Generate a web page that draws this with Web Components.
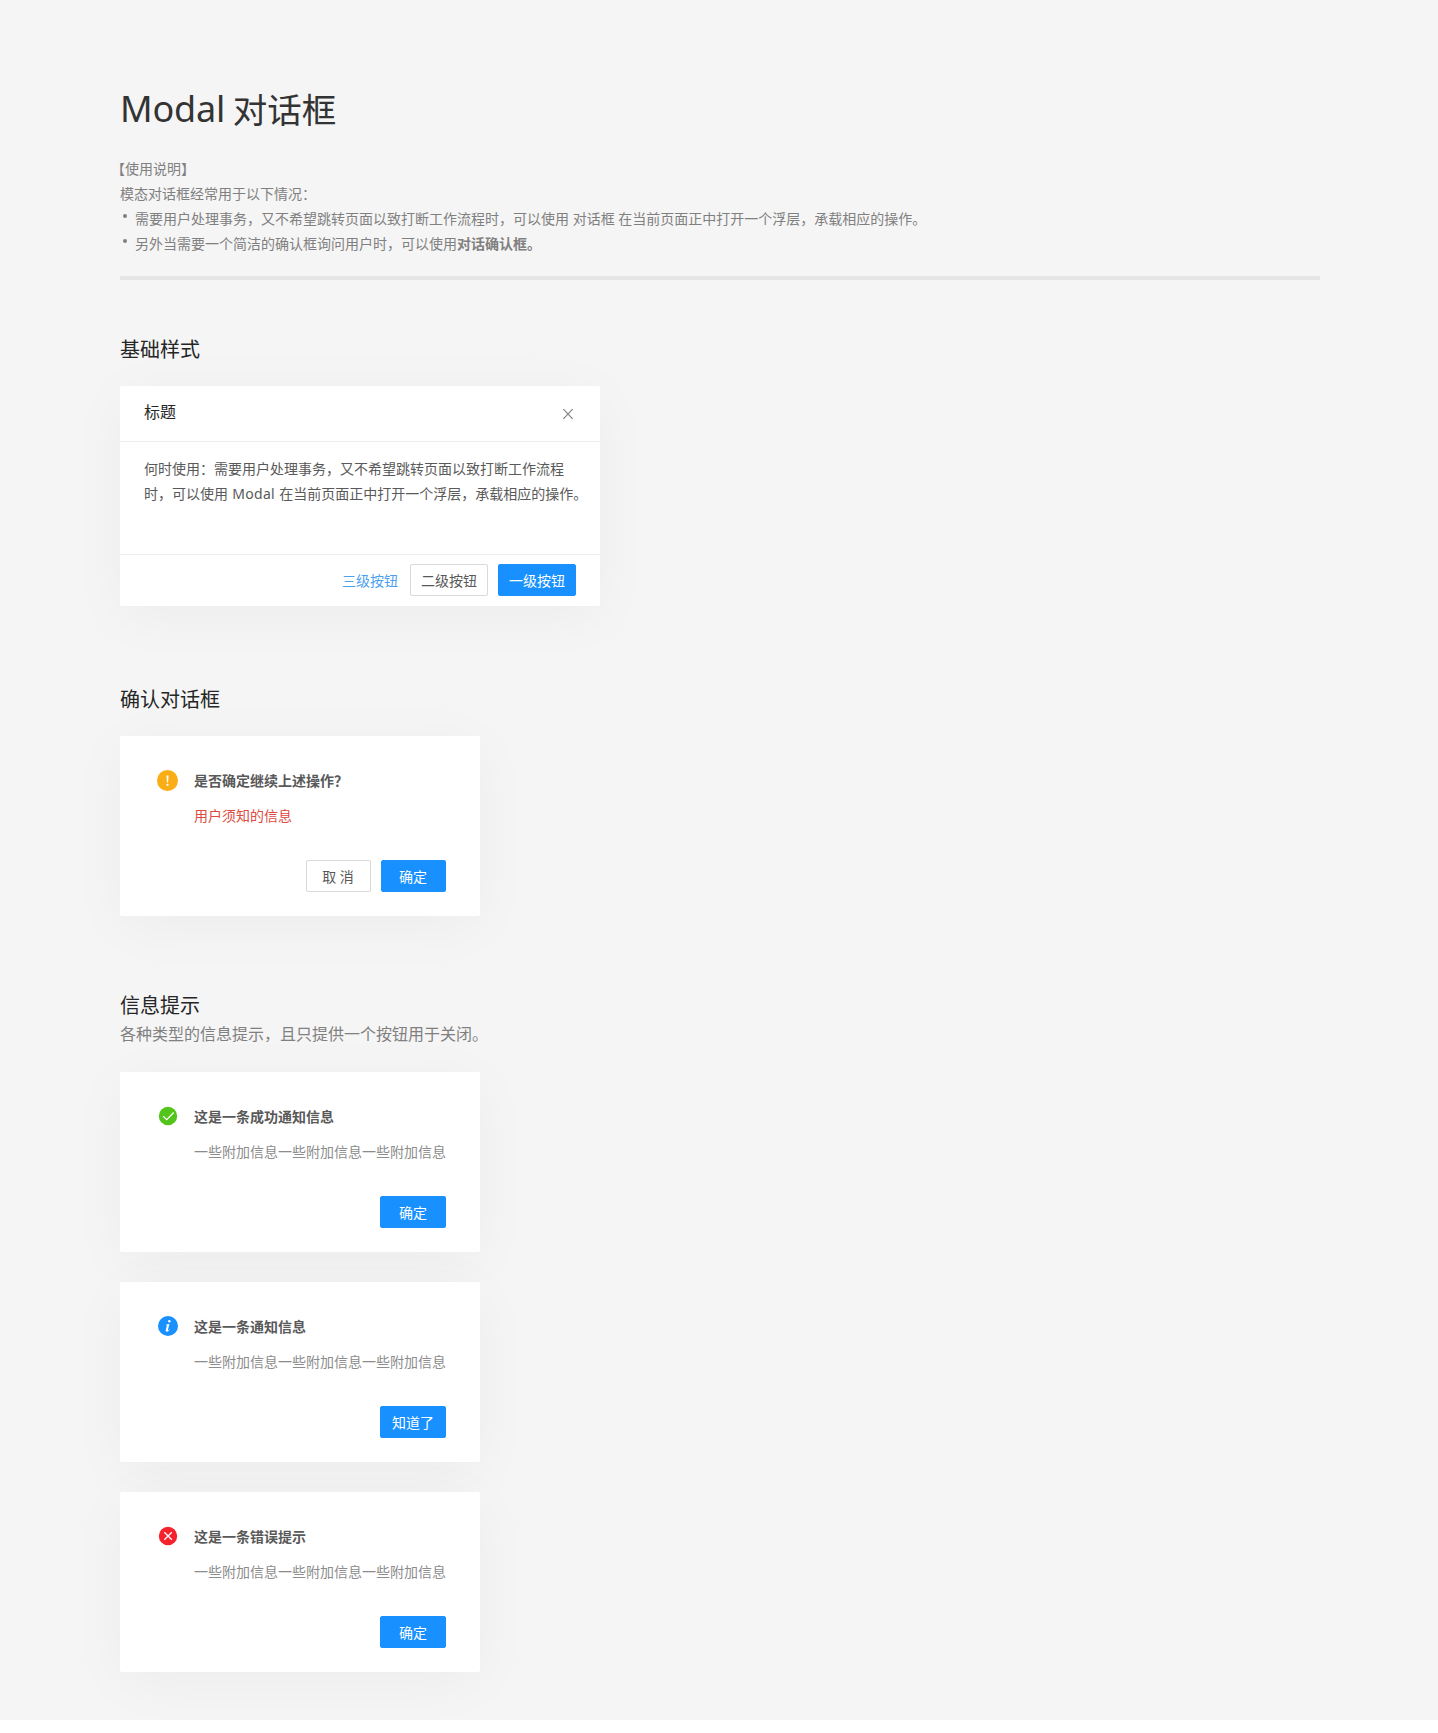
<!DOCTYPE html>
<html lang="zh-CN">
<head>
<meta charset="utf-8">
<title>Modal 对话框</title>
<style>
html{background:#fff}
body{margin:0;font-family:"Noto Sans","Noto Sans CJK SC",sans-serif;font-size:14px}
</style>
</head>
<body>
<modal-doc></modal-doc>
<script>
const define = (name, html) => {
  const tpl = document.createElement('template');
  tpl.innerHTML = html;
  customElements.define(name, class extends HTMLElement {
    constructor() {
      super();
      this.attachShadow({ mode: 'open' }).appendChild(tpl.content.cloneNode(true));
    }
  });
};

define('ui-button', `
<style>
:host{display:flex;box-sizing:border-box;height:32px;width:78px;align-items:center;justify-content:center;border:1px solid #d9d9d9;border-radius:2px;background:#fff;color:#595959;line-height:32px;white-space:nowrap}
:host([kind=primary]){background:#1890ff;border-color:#1890ff;color:#fff}
:host([kind=link]){width:auto;border-color:transparent;background:none;color:#4ba1ee;margin-right:1px}
:host([size=m]){width:65px}
:host([size=l]){width:66px}
span{position:relative;top:1px}
:host([size=m]) span{left:-.5px}
</style><span><slot></slot></span>`);

const glyphs = {
  warning: '<circle cx="10.5" cy="10.5" r="10.5" fill="#faad14"/><path d="M9.5 5.4h2l-.4 7h-1.2z" fill="#fff"/><circle cx="10.5" cy="14.9" r="1.1" fill="#fff"/>',
  success: '<circle cx="11" cy="10" r="9.2" fill="#52c41a"/><path d="M6.2 10.3l3.5 3.4 7-7.2" fill="none" stroke="#fff" stroke-width="1.3"/>',
  info: '<circle cx="11" cy="10" r="10" fill="#1890ff"/><circle cx="12.3" cy="5.2" r="1.25" fill="#fff"/><path d="M9.2 8.5l3.300-.6-1.600 5.900q-.2.900.3.700.6-.3 1.200-1.200l.4.3q-1.400 2.200-2.900 2.200-1.600-.1-1.200-1.700l1.100-4.200q.2-.8-.7-.8z" fill="#fff"/>',
  error: '<circle cx="11" cy="10" r="9.200" fill="#f5222d"/><path d="M7.300 6.200l7.500 7.500M14.800 6.200l-7.500 7.500" fill="none" stroke="#fff" stroke-width="1.300"/>'
};
customElements.define('status-icon', class extends HTMLElement {
  connectedCallback() {
    if (this.shadowRoot) return;
    this.attachShadow({ mode: 'open' }).innerHTML =
      `<style>:host{display:block;width:22px;height:22px}svg{display:block}</style><svg width="22" height="22" viewBox="0 0 22 22">${glyphs[this.getAttribute('type')]}</svg>`;
  }
});

define('ui-modal', `
<style>
:host{display:flex;flex-direction:column;width:480px;height:220px;background:#fff;border-radius:2px;box-shadow:0 10px 60px rgba(0,0,0,.04)}
header{display:flex;box-sizing:border-box;height:56px;padding:0 27px 5px 24px;align-items:center;justify-content:space-between;border-bottom:1px solid #ececec;font-size:16px;color:#262626}
svg{display:block;margin-top:5px}
main{flex:1;padding:14px 0 0 24px;line-height:25px;color:#595959;white-space:nowrap}
footer{display:flex;box-sizing:border-box;height:52px;padding:9px 24px 0;gap:10px;justify-content:flex-end;border-top:1px solid #ececec}
</style>
<header><slot name="title"></slot><svg width="10" height="10" viewBox="0 0 10 10"><path d="M.3 0l9.400 10M9.700 0L.3 10" fill="none" stroke="#808080" stroke-width="1.100"/></svg></header>
<main><slot></slot></main>
<footer><slot name="actions"></slot></footer>`);

define('ui-confirm', `
<style>
:host{display:flex;box-sizing:border-box;flex-direction:column;width:360px;height:180px;padding:34px 34px 24px 37px;background:#fff;border-radius:2px;box-shadow:0 10px 60px rgba(0,0,0,.04)}
.row{display:flex;gap:15px;flex:1}
.text{display:flex;flex-direction:column;gap:11px;margin-top:-1px;line-height:24px;color:#8c8c8c;white-space:nowrap}
b{font-weight:600;color:#595959}
:host([danger]) .info{color:#dc4a41}
.actions{display:flex;gap:10px;justify-content:flex-end}
</style>
<div class="row"><slot name="icon"></slot><div class="text"><b><slot name="title"></slot></b><span class="info"><slot></slot></span></div></div>
<div class="actions"><slot name="actions"></slot></div>`);

define('doc-section', `
<style>
:host{display:flex;flex-direction:column;align-items:flex-start}
h2{margin:0 0 21px;font-weight:400;font-size:20px;line-height:30px;color:#262626}
:host([described]) h2{margin:0}
p{display:none;margin:0 0 26px;padding-top:1px;font-size:16px;line-height:24px;color:#808080}
:host([described]) p{display:block}
.stack{display:flex;flex-direction:column;gap:30px}
</style>
<h2><slot name="heading"></slot></h2><p><slot name="desc"></slot></p><div class="stack"><slot></slot></div>`);

define('doc-intro', `
<style>
:host{display:block;border-bottom:4px solid #e5e5e5;height:187px;color:#808080;line-height:25px}
h1{margin:0 0 27px;font-weight:400;font-size:36px;line-height:40px;letter-spacing:-.2px;word-spacing:-1.500px;color:#333}
h1 span{position:relative;top:1px;font-size:34.500px;letter-spacing:0}
p,ul{margin:0;padding:0;list-style:none;white-space:nowrap}
.lead{margin-left:-9px}
li{display:flex;align-items:center}
li::before{content:"";width:4px;height:4px;border-radius:50%;background:#808080;margin:0 8px 5px 3px}
b{font-weight:600}
</style>
<h1>Modal <span>对话框</span></h1>
<p class="lead">【使用说明】</p>
<p>模态对话框经常用于以下情况：</p>
<ul>
<li><span>需要用户处理事务，又不希望跳转页面以致打断工作流程时，可以使用 对话框 在当前页面正中打开一个浮层，承载相应的操作。</span></li>
<li><span>另外当需要一个简洁的确认框询问用户时，可以使用<b>对话确认框。</b></span></li>
</ul>`);

define('modal-doc', `
<style>
:host{display:flex;box-sizing:border-box;flex-direction:column;height:1720px;padding:89px 118px 0 120px;background:#f5f5f5;overflow:hidden}
.a{margin-top:55px}.b{margin-top:79px}.c{margin-top:75px}
.latin{letter-spacing:.3px;word-spacing:.3px}
</style>
<doc-intro></doc-intro>
<doc-section class="a"><span slot="heading">基础样式</span>
  <ui-modal><span slot="title">标题</span>何时使用：需要用户处理事务，又不希望跳转页面以致打断工作流程<br>时，可以使用<span class="latin"> Modal </span>在当前页面正中打开一个浮层，承载相应的操作。
    <ui-button slot="actions" kind="link">三级按钮</ui-button><ui-button slot="actions">二级按钮</ui-button><ui-button slot="actions" kind="primary">一级按钮</ui-button>
  </ui-modal>
</doc-section>
<doc-section class="b"><span slot="heading">确认对话框</span>
  <ui-confirm danger><status-icon slot="icon" type="warning"></status-icon><span slot="title">是否确定继续上述操作？</span>用户须知的信息
    <ui-button slot="actions" size="m">取 消</ui-button><ui-button slot="actions" size="m" kind="primary">确定</ui-button></ui-confirm>
</doc-section>
<doc-section class="c" described><span slot="heading">信息提示</span><span slot="desc">各种类型的信息提示，且只提供一个按钮用于关闭。</span>
  <ui-confirm><status-icon slot="icon" type="success"></status-icon><span slot="title">这是一条成功通知信息</span>一些附加信息一些附加信息一些附加信息<ui-button slot="actions" size="l" kind="primary">确定</ui-button></ui-confirm>
  <ui-confirm><status-icon slot="icon" type="info"></status-icon><span slot="title">这是一条通知信息</span>一些附加信息一些附加信息一些附加信息<ui-button slot="actions" size="l" kind="primary">知道了</ui-button></ui-confirm>
  <ui-confirm><status-icon slot="icon" type="error"></status-icon><span slot="title">这是一条错误提示</span>一些附加信息一些附加信息一些附加信息<ui-button slot="actions" size="l" kind="primary">确定</ui-button></ui-confirm>
</doc-section>`);
</script>
</body>
</html>
